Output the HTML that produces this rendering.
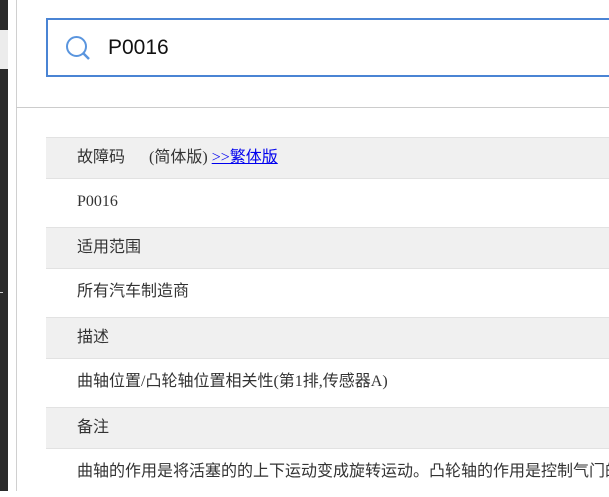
<!DOCTYPE html><html><head><meta charset="utf-8"><style>
body{margin:0;width:609px;height:491px;overflow:hidden;background:#fff;position:relative;font-family:"Liberation Serif","Noto Sans CJK SC",serif;font-size:16px;color:#333}
.l{position:absolute;left:0;top:0;width:8px;height:491px;background:#2b2b2b}
.l2{position:absolute;left:0;top:30px;width:8px;height:39px;background:#ececec}
.tick{position:absolute;left:0;top:292px;width:3px;height:1px;background:#ccc}
.v{position:absolute;left:16px;top:0;width:1px;height:491px;background:#d0d0d0}
.search{position:absolute;left:46px;top:18px;width:563px;height:55px;border:2px solid #4a84d4;border-right:none;overflow:hidden}
.search span{position:absolute;left:60px;top:16px;font-family:"Liberation Sans",sans-serif;font-size:21px;color:#111}
.hr{position:absolute;left:16px;top:107px;width:593px;height:1px;background:#ccc}
.row{position:absolute;left:46px;width:563px;box-sizing:border-box;padding-left:31px;border-top:1px solid #e2e2e2;overflow:hidden;white-space:nowrap}
.g{background:#f0f0f0;height:41px;line-height:39px}
.w{background:#fff;height:49px;line-height:46px}
a{color:#00e;text-decoration:underline}
</style></head><body>
<div class="l"></div><div class="l2"></div><div class="tick"></div><div class="v"></div>
<div class="search"><svg style="position:absolute;left:17px;top:15px" width="28" height="28" viewBox="0 0 28 28"><circle cx="11.5" cy="11.5" r="9.5" fill="none" stroke="#5a95de" stroke-width="2"/><line x1="18.5" y1="18.5" x2="24" y2="24" stroke="#5a95de" stroke-width="2.5"/></svg><span>P0016</span></div>
<div class="hr"></div>
<div class="row g" style="top:137px">故障码<span style="display:inline-block;width:24px"></span>(简体版) <a>&gt;&gt;繁体版</a></div>
<div class="row w" style="top:178px">P0016</div>
<div class="row g" style="top:227px">适用范围</div>
<div class="row w" style="top:268px">所有汽车制造商</div>
<div class="row g" style="top:317px">描述</div>
<div class="row w" style="top:358px">曲轴位置/凸轮轴位置相关性(第1排,传感器A)</div>
<div class="row g" style="top:407px">备注</div>
<div class="row w" style="top:448px">曲轴的作用是将活塞的的上下运动变成旋转运动。凸轮轴的作用是控制气门的开启和闭合</div>
</body></html>
